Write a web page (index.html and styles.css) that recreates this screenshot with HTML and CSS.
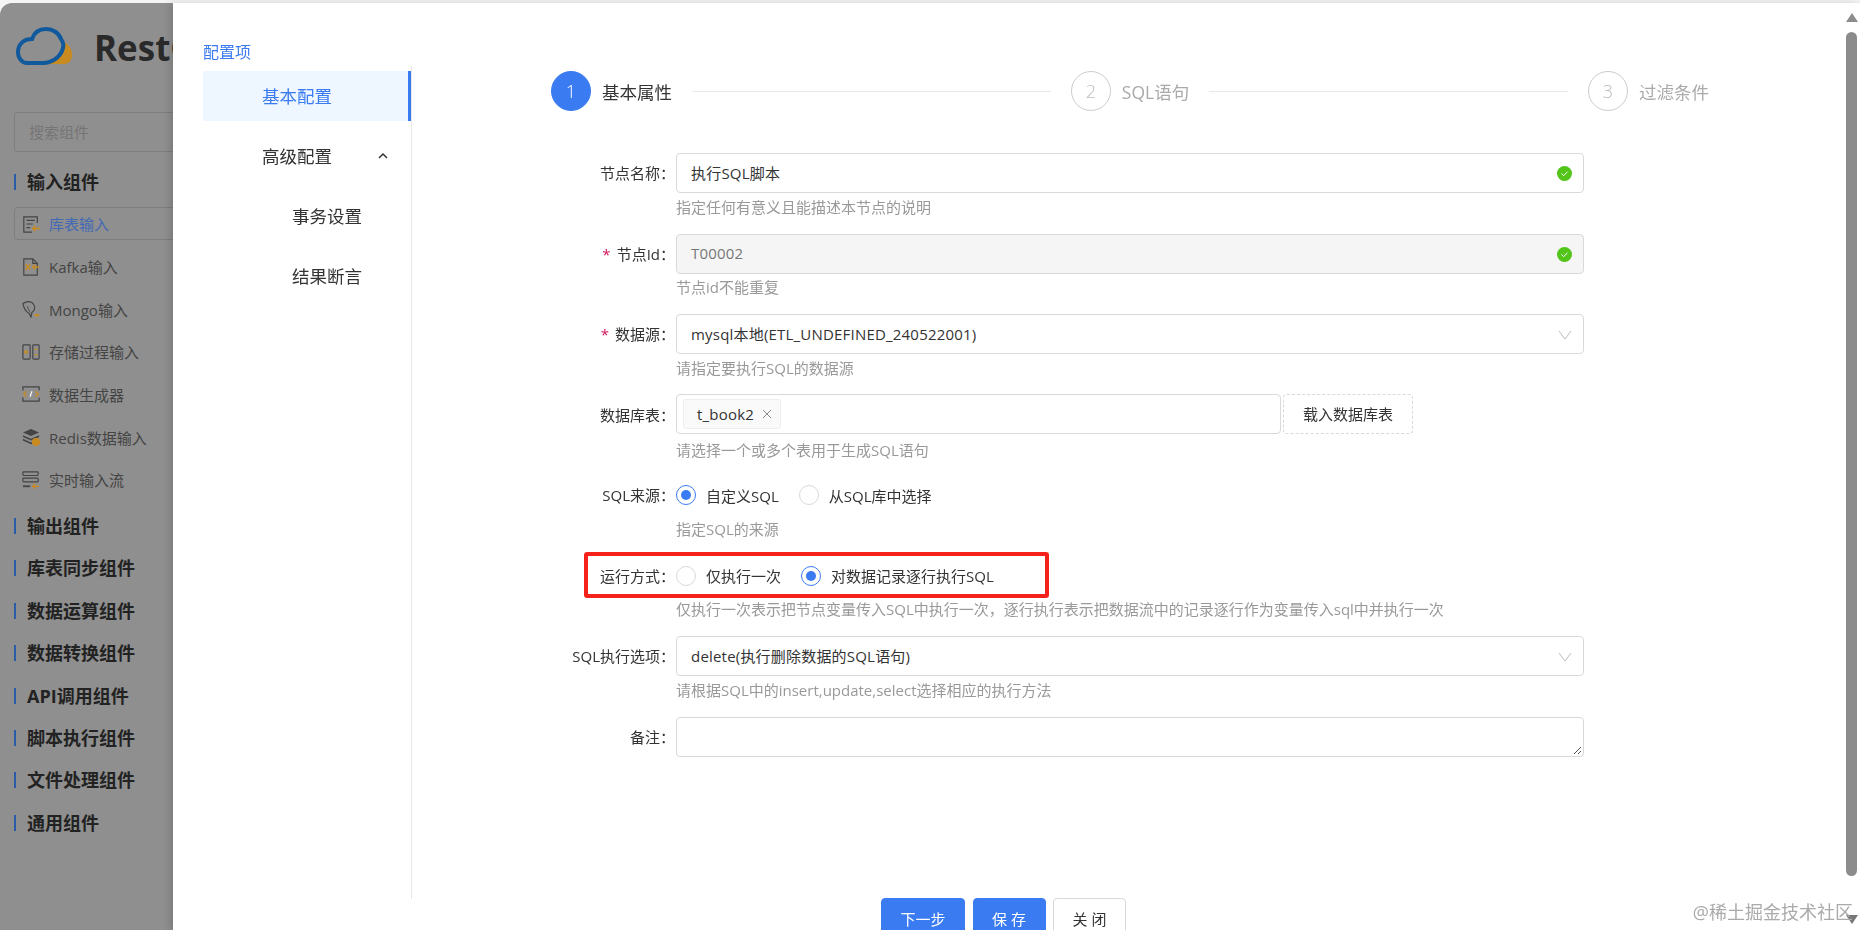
FILE: index.html
```html
<!DOCTYPE html>
<html lang="zh-CN">
<head>
    <meta charset="UTF-8">
    <title>RestCloud ETL</title>
    <link rel="stylesheet" href="styles.css">
</head>
<body>
    <!-- 背后的组件面板 -->
    <div class="app">
        <div class="logo">
            <svg class="logo-icon" width="58" height="40" viewBox="0 0 58 40">
                <path d="M42 14c8 0 14 6 14 14 0 5-3 9-8 9H26z" fill="#c98a1f"/>
                <path d="M11 36h17c10-1 17-7 19-15 1-3 0-6-2-9-2-6-8-10-15-10-7 0-12 4-14 10-9 0-14 6-14 13 0 6 4 11 9 11z" fill="#8f8f8f" stroke="#10599c" stroke-width="4"/>
            </svg>
            <span class="logo-text">RestCloud</span>
        </div>
        <div class="search">搜索组件</div>
        <div class="group-title">输入组件</div>
        <div class="item item-active">
            <svg class="item-icon" width="18" height="18" viewBox="0 0 20 20" fill="none">
                <path d="M17 9V2H2v17h9" stroke="#444" stroke-width="1.300"/>
                <path d="M5 6h9M5 10h7M5 14h4" stroke="#444" stroke-width="1.300"/>
                <path d="M20 15h-8m3-3-3 3 3 3" stroke="#c98a1f" stroke-width="1.600"/>
            </svg>
            库表输入
        </div>
        <div class="item">
            <svg class="item-icon" width="18" height="18" viewBox="0 0 20 20" fill="none">
                <path d="M12 1H2v18h15V6z" stroke="#444" stroke-width="1.300"/>
                <path d="M12 1v5h5" stroke="#444" stroke-width="1.300"/>
                <path d="M4 7l5 6M4 13l5-6" stroke="#c98a1f" stroke-width="1.600"/>
                <path d="M19 10h-7m2.500-2.500L12 10l2.500 2.500" stroke="#c98a1f" stroke-width="1.600"/>
            </svg>
            Kafka输入
        </div>
        <div class="item">
            <svg class="item-icon" width="18" height="18" viewBox="0 0 20 20" fill="none">
                <path d="M1 4c5-3 10-3 12 1 2 3 1 7-2 9l-1 5-2-4C4 13 2 9 1 4z" stroke="#444" stroke-width="1.300"/>
                <path d="M6 7c1 3 2 5 3 7" stroke="#444"/>
                <path d="M14 17h5" stroke="#c98a1f" stroke-width="2.500"/>
            </svg>
            Mongo输入
        </div>
        <div class="item">
            <svg class="item-icon" width="18" height="18" viewBox="0 0 20 20" fill="none">
                <rect x="1" y="2" width="8" height="16" rx="1" stroke="#444" stroke-width="1.300"/>
                <rect x="12" y="2" width="7" height="16" rx="1" stroke="#444" stroke-width="1.300"/>
                <path d="M7 10H3m2-2-2 2 2 2" stroke="#c98a1f" stroke-width="1.400"/>
                <path d="M14 7h3M14 13h3" stroke="#c98a1f" stroke-width="1.400"/>
            </svg>
            存储过程输入
        </div>
        <div class="item">
            <svg class="item-icon" width="18" height="18" viewBox="0 0 20 20" fill="none">
                <path d="M1 6V2h18v4M1 14v4h18v-4" stroke="#444" stroke-width="1.400"/>
                <path d="M5 7l-3 3 3 3M15 7l3 3-3 3" stroke="#c98a1f" stroke-width="1.500"/>
                <path d="M11 7l-2 6" stroke="#eee" stroke-width="1.500"/>
            </svg>
            数据生成器
        </div>
        <div class="item">
            <svg class="item-icon" width="18" height="18" viewBox="0 0 20 20">
                <path d="M1 5l9-4 9 4-9 4z" fill="#444"/>
                <path d="M1 8l9 4 9-4v2l-9 4-9-4z" fill="#444"/>
                <path d="M1 12l9 4 3-1v2l-3 1-9-4z" fill="#444"/>
                <circle cx="15.500" cy="15.500" r="4.500" fill="#c98a1f"/>
            </svg>
            Redis数据输入
        </div>
        <div class="item">
            <svg class="item-icon" width="18" height="18" viewBox="0 0 20 20" fill="none">
                <rect x="1" y="1" width="17" height="4" rx="1" stroke="#444" stroke-width="1.300"/>
                <rect x="1" y="8" width="17" height="4" rx="1" stroke="#444" stroke-width="1.300"/>
                <path d="M1 17h8" stroke="#444" stroke-width="2"/>
                <path d="M19 17h-7m2.500-2.500L12 17l2.500 2.500" stroke="#c98a1f" stroke-width="1.500"/>
            </svg>
            实时输入流
        </div>
        <div class="group-title">输出组件</div>
        <div class="group-title">库表同步组件</div>
        <div class="group-title">数据运算组件</div>
        <div class="group-title">数据转换组件</div>
        <div class="group-title">API调用组件</div>
        <div class="group-title">脚本执行组件</div>
        <div class="group-title">文件处理组件</div>
        <div class="group-title">通用组件</div>
    </div>

    <!-- 节点配置抽屉 -->
    <div class="drawer">
        <div class="drawer-body">
            <div class="drawer-content">
                <div class="side-menu">
                    <div class="menu-title">配置项</div>
                    <div class="menu-list">
                        <div class="menu-item menu-active">基本配置</div>
                        <div class="menu-item">
                            高级配置
                            <svg class="menu-arrow" width="12" height="8" viewBox="0 0 12 8" fill="none">
                                <path d="M2 6l4-4 4 4" stroke="#333" stroke-width="1.500"/>
                            </svg>
                        </div>
                        <div class="menu-item menu-sub">事务设置</div>
                        <div class="menu-item menu-sub">结果断言</div>
                    </div>
                </div>
                <div class="main">
                    <div class="steps">
                        <div class="step step-active"><span class="step-num">1</span><span class="step-name">基本属性</span></div>
                        <div class="step-line"></div>
                        <div class="step"><span class="step-num">2</span><span class="step-name">SQL语句</span></div>
                        <div class="step-line"></div>
                        <div class="step"><span class="step-num">3</span><span class="step-name">过滤条件</span></div>
                    </div>
                    <div class="form">
                        <div class="form-row">
                            <label class="form-label">节点名称：</label>
                            <div class="form-control">
                                <div class="input">执行SQL脚本
                                    <svg class="ok-icon" width="15" height="15" viewBox="0 0 15 15" fill="none">
                                        <circle cx="7.500" cy="7.500" r="7.500" fill="#52c41a"/>
                                        <path d="M4.500 7.500l2.200 2.200 3.800-4" stroke="#fff"/>
                                    </svg>
                                </div>
                                <div class="hint">指定任何有意义且能描述本节点的说明</div>
                            </div>
                        </div>
                        <div class="form-row">
                            <label class="form-label"><span class="required">*</span>节点Id：</label>
                            <div class="form-control">
                                <div class="input input-disabled">T00002
                                    <svg class="ok-icon" width="15" height="15" viewBox="0 0 15 15" fill="none">
                                        <circle cx="7.500" cy="7.500" r="7.500" fill="#52c41a"/>
                                        <path d="M4.500 7.500l2.200 2.200 3.800-4" stroke="#fff"/>
                                    </svg>
                                </div>
                                <div class="hint">节点id不能重复</div>
                            </div>
                        </div>
                        <div class="form-row">
                            <label class="form-label"><span class="required">*</span>数据源：</label>
                            <div class="form-control">
                                <div class="input">mysql本地(ETL_UNDEFINED_240522001)
                                    <svg class="down-icon" width="14" height="10" viewBox="0 0 14 10" fill="none">
                                        <path d="M1 1l6 8 6-8" stroke="#bbb"/>
                                    </svg>
                                </div>
                                <div class="hint">请指定要执行SQL的数据源</div>
                            </div>
                        </div>
                        <div class="form-row">
                            <label class="form-label">数据库表：</label>
                            <div class="form-control">
                                <div class="table-line">
                                    <div class="input input-tags">
                                        <span class="tag">t_book2<svg class="tag-close" width="10" height="10" viewBox="0 0 10 10" fill="none"><path d="M1 1l8 8M9 1l-8 8" stroke="#888"/></svg></span>
                                    </div>
                                    <button class="btn-dashed">载入数据库表</button>
                                </div>
                                <div class="hint hint-table">请选择一个或多个表用于生成SQL语句</div>
                            </div>
                        </div>
                        <div class="form-row">
                            <label class="form-label">SQL来源：</label>
                            <div class="form-control">
                                <div class="radios">
                                    <span class="radio radio-on"></span><span class="radio-text">自定义SQL</span>
                                    <span class="radio"></span><span class="radio-text">从SQL库中选择</span>
                                </div>
                                <div class="hint hint-radio">指定SQL的来源</div>
                            </div>
                        </div>
                        <div class="form-row">
                            <label class="form-label">运行方式：</label>
                            <div class="form-control">
                                <div class="radios">
                                    <span class="radio"></span><span class="radio-text">仅执行一次</span>
                                    <span class="radio radio-on"></span><span class="radio-text">对数据记录逐行执行SQL</span>
                                </div>
                                <div class="hint hint-radio">仅执行一次表示把节点变量传入SQL中执行一次，逐行执行表示把数据流中的记录逐行作为变量传入sql中并执行一次</div>
                            </div>
                            <div class="red-box"></div>
                        </div>
                        <div class="form-row">
                            <label class="form-label">SQL执行选项：</label>
                            <div class="form-control">
                                <div class="input">delete(执行删除数据的SQL语句)
                                    <svg class="down-icon" width="14" height="10" viewBox="0 0 14 10" fill="none">
                                        <path d="M1 1l6 8 6-8" stroke="#bbb"/>
                                    </svg>
                                </div>
                                <div class="hint">请根据SQL中的insert,update,select选择相应的执行方法</div>
                            </div>
                        </div>
                        <div class="form-row">
                            <label class="form-label">备注：</label>
                            <div class="form-control">
                                <div class="input">
                                    <svg class="resize-icon" width="9" height="9" viewBox="0 0 9 9" fill="none">
                                        <path d="M1 8l7-7M5 8l3-3" stroke="#555"/>
                                    </svg>
                                </div>
                            </div>
                        </div>
                    </div>
                </div>
            </div>
            <div class="footer">
                <button class="btn btn-primary">下一步</button>
                <button class="btn btn-primary btn-save">保 存</button>
                <button class="btn btn-default">关 闭</button>
            </div>
        </div>
        <div class="scrollbar">
            <span class="scroll-up"></span>
            <span class="scroll-thumb"></span>
            <span class="scroll-down"></span>
        </div>
    </div>
    <div class="watermark">@稀土掘金技术社区</div>
</body>
</html>
```

FILE: styles.css
```css
* {
    margin: 0;
    padding: 0;
    box-sizing: border-box;
}

body {
    font-family: "Open Sans", "Noto Sans CJK SC", sans-serif;
    font-size: 15px;
    color: #333;
    height: 930px;
    overflow: hidden;
    background-color: #f4f4f4;
}

/* 背后的组件面板（遮罩下的颜色） */
.app {
    width: 200px;
    height: 927px;
    margin-top: 3px;
    padding-left: 14px;
    overflow: hidden;
    background-color: #8f8f8f;
    border-top-left-radius: 12px;
}

.logo {
    display: flex;
    align-items: center;
    width: 260px;
    height: 90px;
    margin-left: 2px;
    padding-bottom: 2px;
}

.logo-text {
    margin-left: 20px;
    font-size: 35px;
    font-weight: 700;
    color: #2a2a2a;
    white-space: nowrap;
}

.search {
    width: 200px;
    height: 40px;
    margin: 19px 0 10px;
    padding: 0 14px;
    line-height: 38px;
    font-size: 15px;
    color: #757575;
    border: 1px solid #7e7e7e;
    border-radius: 4px;
}

.group-title {
    height: 42.400px;
    line-height: 41px;
    font-size: 18px;
    font-weight: 700;
    color: #222;
    position: relative;
    padding-left: 13px;
    white-space: nowrap;
}

.group-title::before {
    content: "";
    position: absolute;
    left: 0;
    top: 12px;
    width: 2px;
    height: 16px;
    background-color: #2a5ba8;
}

.item + .group-title {
    margin-top: 5px;
}

.item {
    display: flex;
    align-items: center;
    gap: 9px;
    width: 200px;
    height: 42.600px;
    padding-left: 8px;
    font-size: 15px;
    color: #444;
    white-space: nowrap;
}

.item-active {
    height: 33px;
    margin: 3px 0 5px;
    padding-left: 7px;
    color: #4369b5;
    border: 1px solid #7e7e7e;
    border-radius: 4px;
}

/* 抽屉 */
.drawer {
    position: fixed;
    top: 3px;
    left: 173px;
    right: 0;
    bottom: 0;
    display: flex;
    background-color: white;
    box-shadow: -3px 0 8px rgba(0, 0, 0, 0.15);
}

.drawer-body {
    flex: 1;
    display: flex;
    flex-direction: column;
    padding-left: 30px;
}

.drawer-content {
    display: flex;
    height: 895px;
}

.side-menu {
    width: 209px;
    flex-shrink: 0;
    padding-top: 38px;
}

.menu-title {
    height: 25px;
    line-height: 22px;
    font-size: 16px;
    color: #3b7bf2;
}

.menu-list {
    height: 833px;
    padding-top: 5px;
    border-right: 1px solid #e8e8e8;
}

.menu-item {
    position: relative;
    height: 60px;
    line-height: 60px;
    padding-left: 59px;
    font-size: 17.500px;
    color: #333;
}

.menu-active {
    height: 50px;
    line-height: 50px;
    margin-bottom: 5px;
    color: #3b7bf2;
    background-color: #eef6ff;
    border-right: 3px solid #3b7bf2;
}

.menu-sub {
    padding-left: 89px;
}

.menu-arrow {
    position: absolute;
    left: 174px;
    top: 26px;
}

.main {
    flex: 1;
    padding: 68px 134px 0 139px;
}

.steps {
    display: flex;
    align-items: center;
    height: 40px;
}

.step {
    display: flex;
    align-items: center;
    gap: 11px;
    color: #aaa;
    font-size: 17.500px;
}

.step-num {
    width: 40px;
    height: 40px;
    line-height: 38px;
    text-align: center;
    border: 1px solid #ccc;
    border-radius: 50%;
    font-size: 18px;
    font-weight: 300;
    color: #bbb;
}

.step-active {
    color: #333;
}

.step-active .step-num {
    color: white;
    background-color: #3b7bf2;
    border-color: #3b7bf2;
}

.step-line {
    flex: 1;
    height: 1px;
    margin: 0 20px;
    background-color: #e8e8e8;
}

.form {
    margin-top: 42px;
    margin-left: -139px;
}

.form-row {
    position: relative;
    display: flex;
    height: 80.500px;
}

.form-label {
    width: 263px;
    flex-shrink: 0;
    line-height: 40px;
    text-align: right;
    white-space: nowrap;
    font-size: 15px;
}

.required {
    color: #d4145a;
    margin-right: 6px;
}

.form-control {
    width: 908px;
    margin-left: 1px;
}

.input {
    position: relative;
    display: flex;
    align-items: center;
    height: 40px;
    padding: 0 14px 1px;
    font-size: 15px;
    letter-spacing: 0.200px;
    color: #333;
    background-color: white;
    border: 1px solid #d9d9d9;
    border-radius: 4px;
}

.input-disabled {
    color: #777;
    background-color: #f5f5f5;
}

.ok-icon {
    position: absolute;
    right: 11px;
    top: 12px;
}

.down-icon {
    position: absolute;
    right: 11px;
    top: 15px;
}

.resize-icon {
    position: absolute;
    right: 1px;
    bottom: 1px;
}

.table-line {
    display: flex;
    gap: 2px;
    align-items: center;
    margin-top: -1px;
}

.input-tags {
    width: 605px;
    padding: 0 6px;
}

.tag {
    display: flex;
    align-items: center;
    gap: 8px;
    height: 30px;
    padding: 0 8px 0 13px;
    background-color: #fafafa;
    border: 1px solid #eee;
    border-radius: 3px;
}

.btn-dashed {
    width: 130px;
    height: 40px;
    font-family: inherit;
    font-size: 15px;
    color: #333;
    background-color: white;
    border: 1px dashed #d9d9d9;
    border-radius: 4px;
}

.hint {
    height: 22px;
    margin-top: 2.500px;
    line-height: 22px;
    font-size: 15px;
    color: #999;
    white-space: nowrap;
}

.hint-table {
    margin-top: 5px;
}

.radios {
    display: flex;
    align-items: center;
    height: 40px;
}

.radio {
    width: 20px;
    height: 20px;
    border: 1px solid #d9d9d9;
    border-radius: 50%;
    flex-shrink: 0;
    position: relative;
}

.radio-on {
    border-color: #3b7bf2;
}

.radio-on::after {
    content: "";
    position: absolute;
    left: 4px;
    top: 4px;
    width: 10px;
    height: 10px;
    border-radius: 50%;
    background-color: #3b7bf2;
}

.radio-text {
    margin: 0 20px 0 10px;
    font-size: 15px;
}

.red-box {
    position: absolute;
    left: 172px;
    top: -4px;
    width: 465px;
    height: 46px;
    border: 4px solid #f5221b;
    border-radius: 3px;
}

.footer {
    display: flex;
    gap: 7.500px;
    margin-left: 678px;
}

.btn {
    height: 40px;
    font-family: inherit;
    font-size: 15px;
    border-radius: 4px;
    border: 1px solid #d9d9d9;
    width: 73px;
}

.btn-primary {
    width: 84px;
    color: white;
    background-color: #3b7bf2;
    border-color: #3b7bf2;
}

.btn-save {
    width: 73px;
}

.btn-default {
    color: #333;
    background-color: white;
}

/* 滚动条 */
.scrollbar {
    width: 17px;
    display: flex;
    flex-direction: column;
    align-items: center;
    padding-top: 10px;
}

.scroll-up {
    width: 0;
    height: 0;
    border-left: 6px solid transparent;
    border-right: 6px solid transparent;
    border-bottom: 9px solid #8c8c8c;
}

.scroll-thumb {
    width: 11px;
    height: 844px;
    margin-top: 10px;
    background-color: #8c8c8c;
    border-radius: 6px;
}

.scroll-down {
    width: 0;
    height: 0;
    margin-top: 39px;
    border-left: 6px solid transparent;
    border-right: 6px solid transparent;
    border-top: 9px solid #777;
}

.watermark {
    position: fixed;
    right: 7px;
    bottom: 6px;
    font-size: 18px;
    color: #aaa;
    white-space: nowrap;
}
```
